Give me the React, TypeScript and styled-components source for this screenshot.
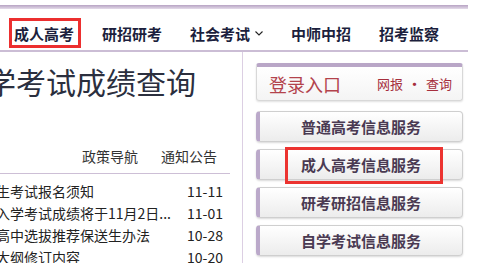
import React from "react";
import styled, { createGlobalStyle } from "styled-components";

const Global = createGlobalStyle`
  html, body { margin: 0; padding: 0; background: #fff; }
  body {
    width: 478px; height: 265px; overflow: hidden;
    font-family: "Noto Sans CJK SC", "Noto Sans", sans-serif;
  }
`;

const Header = styled.header`
  width: 468px;
  padding-top: 5px;
`;

const TopBand = styled.div`
  height: 4px;
  background: linear-gradient(#b7a3c3, #e4dbe9);
`;

const Nav = styled.nav`
  display: flex;
  align-items: flex-start;
  gap: 16px;
  height: 43px;
  box-sizing: border-box;
  padding: 9px 0 0 9px;
  border-bottom: 2px solid #cbbdd5;
`;

const NavItem = styled.a<{ $active?: boolean }>`
  display: flex;
  align-items: center;
  gap: 5px;
  height: 30px;
  box-sizing: border-box;
  padding: 0 4px 0 2px;
  border: 3px solid ${(p) => (p.$active ? "#ec2f2f" : "transparent")};
  font-size: 15px;
  font-weight: 700;
  color: #1c1f3d;
  white-space: nowrap;
`;

const Main = styled.main`
  display: flex;
`;

const LeftCol = styled.section`
  width: 242px;
  height: 211px;
  border-right: 1px solid #dccfe3;
  overflow: hidden;
`;

const Title = styled.h1`
  margin: 11px 0 0 -14px;
  font-size: 30px;
  line-height: 36px;
  font-weight: 400;
  color: #2b2f3e;
  white-space: nowrap;
`;

const Tabs = styled.div`
  display: flex;
  justify-content: flex-end;
  gap: 23px;
  margin: 47px 12px 0 0;
  padding: 0 13px 7px 0;
  border-bottom: 1px solid #cdbfd6;
`;

const Tab = styled.span`
  font-size: 14px;
  line-height: 20px;
  color: #333;
`;

const List = styled.ul`
  list-style: none;
  margin: 0 19px 0 -4px;
  padding: 6px 0 0;
`;

const Row = styled.li`
  display: flex;
  justify-content: space-between;
  font-size: 14px;
  line-height: 22px;
  color: #222;
  white-space: nowrap;
`;

const RightCol = styled.aside`
  width: 207px;
  padding: 11px 0 0 13px;
`;

const LoginBox = styled.div`
  height: 38px;
  box-sizing: border-box;
  display: flex;
  align-items: center;
  justify-content: space-between;
  padding: 0 10px 0 12px;
  border: 1px solid #d8d8d8;
  border-top: 4px solid #b9a6c7;
  border-radius: 3px;
  background: linear-gradient(#ffffff, #f4f4f4);
  box-shadow: 0 1px 2px rgba(0, 0, 0, 0.12);
`;

const LoginTitle = styled.span`
  font-size: 18px;
  color: #b3434c;
`;

const LoginLinks = styled.span`
  font-size: 13px;
  color: #a62f3d;
`;

const Dot = styled.b`
  margin: 0 5px;
`;

const Buttons = styled.div`
  display: flex;
  flex-direction: column;
  gap: 7px;
  margin-top: 10px;
`;

const ServiceButton = styled.div`
  position: relative;
  height: 31px;
  box-sizing: border-box;
  display: flex;
  align-items: center;
  justify-content: center;
  border: 1px solid #cfcfcf;
  border-left: 4px solid #bba9ca;
  border-radius: 4px;
  background: linear-gradient(#ffffff, #ececec);
  box-shadow: 0 1px 2px rgba(0, 0, 0, 0.15);
  font-size: 15px;
  font-weight: 700;
  color: #4a3a52;
`;

const Highlight = styled.span`
  position: absolute;
  left: 25px;
  top: -3px;
  width: 158px;
  height: 37px;
  box-sizing: border-box;
  border: 3px solid #ec3330;
  pointer-events: none;
`;

const Chevron = () => (
  <svg width="8" height="5" viewBox="0 0 8 5" fill="none">
    <path d="M0.5 0.5 L4 4 L7.5 0.5" stroke="#222" strokeWidth="1.1" />
  </svg>
);

const news = [
  { t: "生考试报名须知", d: "11-11" },
  { t: "入学考试成绩将于11月2日...", d: "11-01" },
  { t: "高中选拔推荐保送生办法", d: "10-28" },
  { t: "大纲修订内容", d: "10-20" },
];

const services = ["普通高考信息服务", "成人高考信息服务", "研考研招信息服务", "自学考试信息服务"];

export default function App() {
  return (
    <>
      <Global />
      <Header>
        <TopBand />
        <Nav>
          <NavItem $active>成人高考</NavItem>
          <NavItem>研招研考</NavItem>
          <NavItem>
            社会考试
            <Chevron />
          </NavItem>
          <NavItem>中师中招</NavItem>
          <NavItem>招考监察</NavItem>
        </Nav>
      </Header>
      <Main>
        <LeftCol>
          <Title>学考试成绩查询</Title>
          <Tabs>
            <Tab>政策导航</Tab>
            <Tab>通知公告</Tab>
          </Tabs>
          <List>
            {news.map((n) => (
              <Row key={n.d}>
                <span>{n.t}</span>
                <span>{n.d}</span>
              </Row>
            ))}
          </List>
        </LeftCol>
        <RightCol>
          <LoginBox>
            <LoginTitle>登录入口</LoginTitle>
            <LoginLinks>
              网报<Dot>•</Dot>查询
            </LoginLinks>
          </LoginBox>
          <Buttons>
            {services.map((s, i) => (
              <ServiceButton key={s}>
                {s}
                {i === 1 && <Highlight />}
              </ServiceButton>
            ))}
          </Buttons>
        </RightCol>
      </Main>
    </>
  );
}
